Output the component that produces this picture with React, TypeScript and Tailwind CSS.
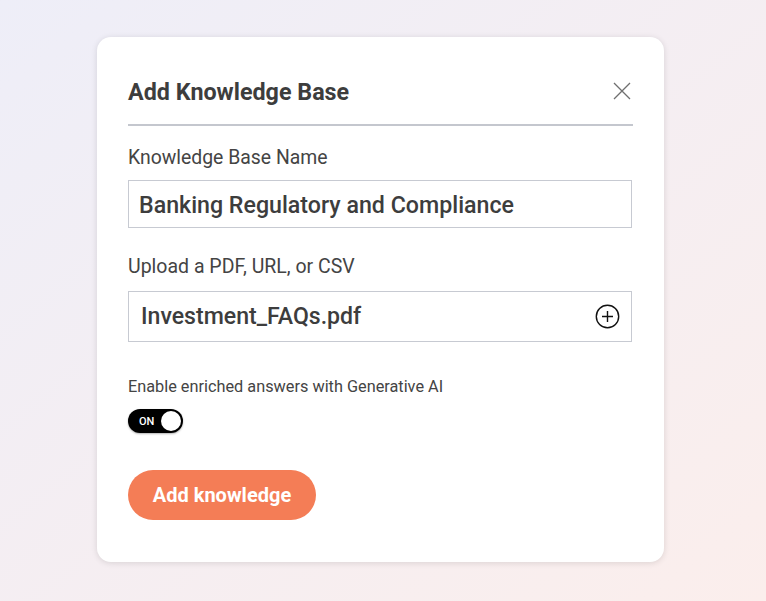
import React from "react";

export default function App() {
  return (
    <div
      className="w-[766px] h-[601px] flex items-start pl-[97px] pt-[37px] bg-gradient-to-br from-[#eeeef8] to-[#fbeeec]"
      style={{ fontFamily: "Roboto, 'Liberation Sans', sans-serif" }}
    >
      <div className="w-[567px] h-[525px] bg-white rounded-[14px] shadow-[0_1px_6px_rgba(0,0,0,0.12)] px-[31px] pt-[41px]">
        <div className="flex items-center justify-between h-[30px]">
          <h1 className="text-[23.3px] font-bold text-[#3d3d3d] leading-none">Add Knowledge Base</h1>
          <svg width="18" height="18" viewBox="0 0 18 18" className="mr-[2px] mt-[-4px]">
            <path d="M1 1L17 17M17 1L1 17" stroke="#6f6f6f" strokeWidth="1.3" fill="none" />
          </svg>
        </div>
        <div className="h-[2px] bg-[#c4c7ce] mt-[16px] w-[505px]" />
        <div className="mt-[22px] text-[19.4px] text-[#444] leading-none">Knowledge Base Name</div>
        <div className="mt-[13px] w-[504px] h-[48px] border border-[#c7cad2] flex items-center px-[10px]">
          <span className="text-[23.2px] font-medium text-[#3d3d3d] mt-[1px]">Banking Regulatory and Compliance</span>
        </div>
        <div className="mt-[29px] text-[19.5px] text-[#444] leading-none">Upload a PDF, URL, or CSV</div>
        <div className="mt-[14px] w-[504px] h-[51px] border border-[#c7cad2] flex items-center justify-between pl-[12px] pr-[11px]">
          <span className="text-[23.1px] font-medium text-[#3d3d3d] mt-[2px]">Investment_FAQs.pdf</span>
          <svg width="25" height="25" viewBox="0 0 25 25" className="mt-[1px]">
            <circle cx="12.5" cy="12.5" r="11.2" stroke="#111" strokeWidth="1.4" fill="none" />
            <path d="M12.5 7V18M7 12.5H18" stroke="#111" strokeWidth="1.4" />
          </svg>
        </div>
        <div className="mt-[37px] text-[16.3px] text-[#444] leading-none">Enable enriched answers with Generative AI</div>
        <div className="mt-[14px] w-[55px] h-[24px] rounded-full bg-black flex items-center justify-between pl-[11px] pr-[2px] shadow-[0_1px_2px_rgba(0,0,0,0.3)]">
          <span className="text-[11px] text-white font-medium leading-none">ON</span>
          <span className="w-[20px] h-[20px] rounded-full bg-white" />
        </div>
        <button className="mt-[37px] w-[188px] h-[50px] rounded-full bg-[#f47d56] text-white text-[20px] font-bold">
          Add knowledge
        </button>
      </div>
    </div>
  );
}
